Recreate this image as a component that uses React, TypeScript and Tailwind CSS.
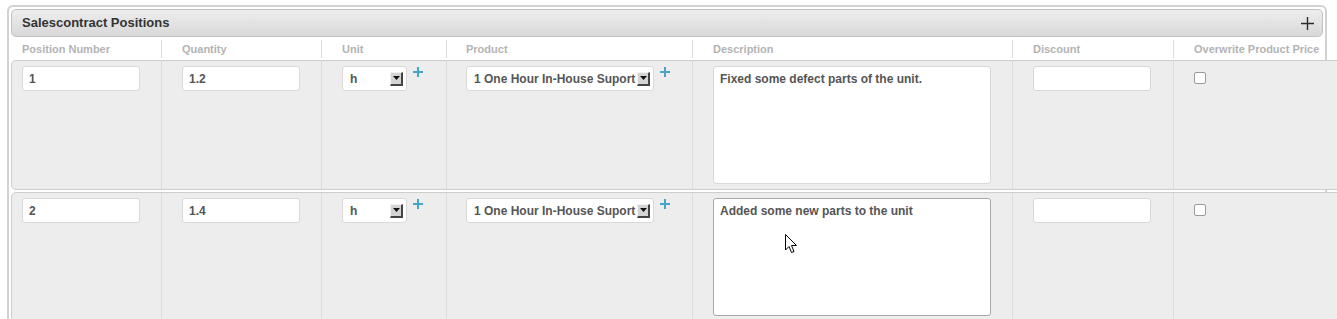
import React from 'react';

interface Position {
  number: string;
  quantity: string;
  unit: string;
  product: string;
  description: string;
  focused?: boolean;
}

const positions: Position[] = [
  { number: '1', quantity: '1.2', unit: 'h', product: '1 One Hour In-House Suport', description: 'Fixed some defect parts of the unit.' },
  { number: '2', quantity: '1.4', unit: 'h', product: '1 One Hour In-House Suport', description: 'Added some new parts to the unit', focused: true },
];

const headers = [
  { label: 'Position Number', cls: 'w-[149px] pl-[10px]' },
  { label: 'Quantity', cls: 'w-[160px] pl-[20px] border-l border-[#dcdcdc]' },
  { label: 'Unit', cls: 'w-[125px] pl-[20px] border-l border-[#dcdcdc]' },
  { label: 'Product', cls: 'w-[246px] pl-[19px] border-l border-[#dcdcdc]' },
  { label: 'Description', cls: 'w-[320px] pl-[20px] border-l border-[#dcdcdc]' },
  { label: 'Discount', cls: 'w-[161px] pl-[20px] border-l border-[#dcdcdc]' },
  { label: 'Overwrite Product Price', cls: 'w-[167px] pl-[20px] border-l border-[#dcdcdc]' },
];

function TextInput({ value, width = 'w-[118px]' }: { value: string; width?: string }) {
  return (
    <div className={`${width} h-[25px] bg-white border border-[#d9d9d9] rounded-[3px] px-[6px] flex items-center text-[12px] font-bold text-[#555]`}>
      {value}
    </div>
  );
}

function SelectBox({ value, width }: { value: string; width: string }) {
  return (
    <div className={`${width} h-[25px] bg-white border border-[#d9d9d9] rounded-[3px] pl-[7px] pr-[3px] flex items-center justify-between text-[12px] font-bold text-[#555]`}>
      <span>{value}</span>
      <span className="w-[13px] h-[14px] bg-[#d4d4d4] border-t border-l border-t-[#f2f2f2] border-l-[#f2f2f2] border-r-2 border-b-2 border-r-[#444] border-b-[#444] flex items-center justify-center">
        <svg width="7" height="4" viewBox="0 0 7 4">
          <path d="M0 0 L7 0 L3.5 4 Z" fill="#111" />
        </svg>
      </span>
    </div>
  );
}

function AddIcon() {
  return (
    <svg width="10" height="10" viewBox="0 0 10 10" className="ml-[6px] mt-[1px] shrink-0">
      <path d="M5 0 V10 M0 5 H10" stroke="#45a5c6" strokeWidth="2" />
    </svg>
  );
}

function PositionRow({ p }: { p: Position }) {
  return (
    <div className="flex shrink-0 w-[1330px] h-[130px] border border-[#cdcdcd] rounded-l-[5px] bg-[#ededed]">
      <div className="w-[149px] shrink-0 pl-[10px] pt-[5px]">
        <TextInput value={p.number} />
      </div>
      <div className="w-[160px] shrink-0 pl-[20px] pt-[5px] border-l border-[#dcdcdc]">
        <TextInput value={p.quantity} />
      </div>
      <div className="w-[125px] shrink-0 pl-[20px] pt-[5px] border-l border-[#dcdcdc] flex items-start">
        <SelectBox value={p.unit} width="w-[65px]" />
        <AddIcon />
      </div>
      <div className="w-[246px] shrink-0 pl-[19px] pt-[5px] border-l border-[#dcdcdc] flex items-start">
        <SelectBox value={p.product} width="w-[188px]" />
        <AddIcon />
      </div>
      <div className="w-[320px] shrink-0 pl-[20px] pt-[5px] border-l border-[#dcdcdc]">
        <div
          className={`w-[278px] h-[118px] bg-white rounded-[3px] px-[6px] py-[3px] text-[12px] font-bold text-[#555] border ${
            p.focused ? 'border-[#a8a8a8]' : 'border-[#d9d9d9]'
          }`}
        >
          {p.description}
        </div>
      </div>
      <div className="w-[161px] shrink-0 pl-[20px] pt-[5px] border-l border-[#dcdcdc]">
        <TextInput value="" />
      </div>
      <div className="w-[167px] shrink-0 pl-[20px] pt-[11px] border-l border-[#dcdcdc]">
        <div className="w-[12px] h-[12px] bg-white border border-[#9a9a9a] rounded-[2px]" />
      </div>
    </div>
  );
}

export default function App() {
  return (
    <div className="relative w-[1337px] h-[319px] overflow-hidden bg-white font-['Liberation_Sans',Arial,sans-serif]">
      <div className="ml-[7px] mt-[5px] w-[1320px] border-2 border-[#d2d2d2] rounded-[6px] bg-white">
        <div className="mx-[2px] mt-[2px] h-[28px] border border-[#c2c2c2] rounded-[5px] bg-gradient-to-b from-[#eeeeee] to-[#d8d8d8] pl-[10px] pr-[8px] flex items-center justify-between">
          <span className="text-[13px] font-bold text-[#333]">Salescontract Positions</span>
          <svg width="13" height="13" viewBox="0 0 13 13">
            <path d="M6.5 0 V13 M0 6.5 H13" stroke="#2b2b2b" strokeWidth="1.4" />
          </svg>
        </div>

        <div className="ml-[2px] mt-[1px] h-[22px] flex border-l border-transparent">
          {headers.map((h) => (
            <div key={h.label} className={`${h.cls} shrink-0 h-[18px] mt-[2px] flex items-center text-[11px] font-bold text-[#b3b3b3] whitespace-nowrap`}>
              {h.label}
            </div>
          ))}
        </div>

        <div className="ml-[2px] flex flex-col gap-[2px]">
          {positions.map((p) => (
            <PositionRow key={p.number} p={p} />
          ))}
        </div>
      </div>

      <svg width="13" height="20" viewBox="0 0 13 20" className="absolute left-[785px] top-[234px]">
        <path d="M0.5 0.5 L0.5 16 L4 12.5 L6.5 18.5 L9 17.5 L6.5 11.5 L11.5 11.5 Z" fill="#fff" stroke="#000" strokeWidth="1" />
      </svg>
    </div>
  );
}
